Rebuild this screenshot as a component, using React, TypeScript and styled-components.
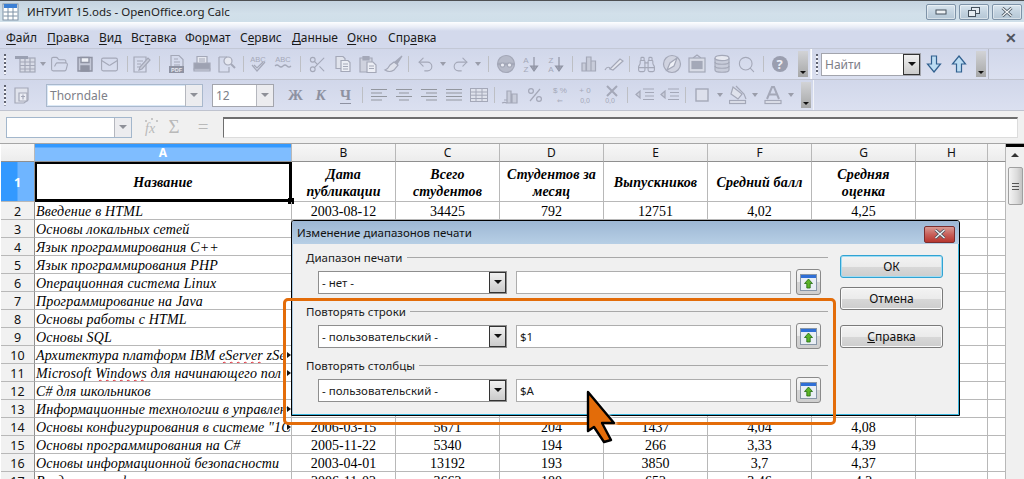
import { Fragment, ReactNode } from "react";
import {
  Binoculars,
  FolderOpen,
  Mail,
  Redo2,
  Scissors,
  Search,
  Undo2,
} from "lucide-react";
import styled, { createGlobalStyle } from "styled-components";

const uiFont = `"Noto Sans", "Open Sans", "Liberation Sans", sans-serif`;
const cellFont = `"Liberation Serif", serif`;
const gridLine = "#b8b8b8";
const orange = "#e36c09";
const iconGrey = "#a4a8b8";

const Global = createGlobalStyle`
  html, body {
    margin: 0;
    padding: 0;
    background: #fff;
  }
  * {
    box-sizing: border-box;
  }
`;

const Page = styled.div`
  position: relative;
  display: flex;
  flex-direction: column;
  width: 1024px;
  height: 479px;
  overflow: hidden;
  font-family: ${uiFont};
  color: #1a1a1a;
`;

/* window chrome */
const TitleBar = styled.div`
  display: flex;
  align-items: center;
  height: 22px;
  flex: none;
  padding: 0 2px 0 1px;
  border-top: 1px solid #4d4f52;
  background: linear-gradient(180deg, #c4d3e0 0%, #d2e0ea 60%, #cfdfe9 100%);
`;
const TitleText = styled.span`
  margin-left: 6px;
  font-size: 11.5px;
  color: #222;
`;
const WinButtons = styled.div`
  display: flex;
  gap: 3px;
  margin-left: auto;
`;
const WinButton = styled.div`
  display: flex;
  align-items: center;
  justify-content: center;
  width: 30px;
  height: 16px;
  border: 1px solid #7e93a8;
  border-radius: 2px;
  background: linear-gradient(180deg, #d9e5ee 0%, #c3d3e0 50%, #b4c6d5 100%);
  box-shadow: inset 0 0 0 1px rgba(255, 255, 255, 0.45);
`;
const MenuBar = styled.div`
  display: flex;
  align-items: center;
  height: 27px;
  flex: none;
  padding: 4px 5px 0 6px;
  border-bottom: 1px solid #c3c8d6;
  background: linear-gradient(180deg, #fdfeff 0, #e9edf6 5px, #d3d9ec 9px, #d3d9ec 100%);
  font-size: 12px;
`;
const MenuItem = styled.span<{ $w: number }>`
  width: ${(p) => p.$w}px;
  white-space: nowrap;
  u {
    text-underline-offset: 2px;
  }
`;
const MenuClose = styled.span`
  margin-left: auto;
  margin-right: 2px;
  font-size: 14px;
  font-weight: 700;
  color: #50535e;
`;

/* toolbars */
const ToolRow = styled.div<{ $h: number }>`
  display: flex;
  height: ${(p) => p.$h}px;
  flex: none;
  border-bottom: 1px solid #bfc3cf;
  background: linear-gradient(180deg, #d1d7ea 0%, #dbe0f0 100%);
`;
const Toolbar = styled.div<{ $w: number }>`
  display: flex;
  align-items: center;
  width: ${(p) => p.$w}px;
  flex: none;
  padding-left: 3px;
  border-right: 1px solid #f1f3f8;
`;
const FindToolbar = styled(Toolbar)`
  border-right: 1px solid #b6bac8;
  border-left: 1px solid #fff;
`;
const Grip = styled.div<{ $after: number }>`
  width: 5px;
  height: 21px;
  flex: none;
  margin-right: ${(p) => p.$after}px;
  background: repeating-linear-gradient(180deg, #5f6270 0 2px, #f6f7fb 2px 4px);
  clip-path: inset(0 2px 0 1px);
`;
const Tool = styled.div`
  display: flex;
  align-items: center;
  justify-content: center;
  width: 25px;
  height: 22px;
  flex: none;
  color: ${iconGrey};
  svg {
    display: block;
  }
`;
const LetterTool = styled(Tool)<{ $underline?: boolean; $italic?: boolean }>`
  font-family: ${cellFont};
  font-size: 15px;
  font-weight: 700;
  font-style: ${(p) => (p.$italic ? "italic" : "normal")};
  text-decoration: ${(p) => (p.$underline ? "underline" : "none")};
  text-underline-offset: 3px;
  color: #8d91a1;
`;
const Caret = styled.div<{ $w: number }>`
  display: flex;
  align-items: center;
  justify-content: center;
  width: ${(p) => p.$w}px;
  flex: none;
  &::before {
    content: "";
    border-top: 4px solid #9a9daa;
    border-left: 3px solid transparent;
    border-right: 3px solid transparent;
  }
`;
const Sep = styled.div<{ $l: number; $r: number }>`
  width: 1px;
  height: 16px;
  flex: none;
  margin: 0 ${(p) => p.$r}px 0 ${(p) => p.$l}px;
  background: #bdbfc4;
`;
const Overflow = styled.div<{ $h: number }>`
  display: flex;
  align-items: flex-end;
  justify-content: center;
  width: 10px;
  height: ${(p) => p.$h}px;
  flex: none;
  margin-left: auto;
  margin-right: 2px;
  padding-bottom: 3px;
  background: linear-gradient(180deg, #d2d3d6 0%, #a6a7a7 100%);
  &::after {
    content: "";
    border-top: 3px solid #111;
    border-left: 3px solid transparent;
    border-right: 3px solid transparent;
  }
`;
const HelpBadge = styled.div`
  display: flex;
  align-items: center;
  justify-content: center;
  width: 16px;
  height: 16px;
  border-radius: 50%;
  background: #9a9eaf;
  color: #eceef6;
  font-size: 13px;
  font-weight: 700;
`;

/* combos on the toolbars */
const Combo = styled.div<{ $w: number; $active?: boolean; $l?: number; $r?: number }>`
  display: flex;
  align-items: center;
  width: ${(p) => p.$w}px;
  height: 23px;
  flex: none;
  margin: 0 ${(p) => p.$r ?? 0}px 0 ${(p) => p.$l ?? 0}px;
  background: #fff;
  border: 1px solid ${(p) => (p.$active ? "#a9b8cc" : "#a3a5ad")};
  box-shadow: ${(p) => (p.$active ? "inset 0 0 0 1px #dbe8f6" : "none")};
  font-size: 12px;
  color: #7e8088;
`;
const ComboText = styled.span`
  flex: 1;
  padding-left: 3px;
  white-space: nowrap;
`;
const ComboArrow = styled.div<{ $solid?: boolean }>`
  display: flex;
  align-items: center;
  justify-content: center;
  width: 17px;
  height: 100%;
  flex: none;
  background: ${(p) => (p.$solid ? "linear-gradient(180deg,#f2f2f2,#c9c9c9)" : "#ececef")};
  border-left: 1px solid ${(p) => (p.$solid ? "#333" : "#b5b7be")};
  outline: ${(p) => (p.$solid ? "1px solid #333" : "none")};
  outline-offset: -1px;
  &::before {
    content: "";
    border-top: 4px solid ${(p) => (p.$solid ? "#111" : "#8e9098")};
    border-left: 4px solid transparent;
    border-right: 4px solid transparent;
  }
`;

/* formula bar */
const FormulaBar = styled.div`
  display: flex;
  align-items: center;
  height: 33px;
  flex: none;
  padding: 0 6px;
  background: #f0f0f0;
  border-bottom: 1px solid #a6a6a6;
`;
const NameBox = styled(Combo)`
  height: 21px;
  border-color: #a3b7cc;
`;
const FormulaTool = styled(Tool)<{ $gap: number }>`
  width: 22px;
  margin-right: ${(p) => p.$gap}px;
  color: #b9b9b9;
  font-family: ${cellFont};
  font-size: 19px;
`;
const FormulaInput = styled.div`
  flex: 1;
  height: 21px;
  background: #fff;
  border: 1px solid #dcdcdc;
  border-top: 2px solid #6e6e6e;
  border-left: 1px solid #6e6e6e;
`;

/* sheet */
const Sheet = styled.div`
  display: flex;
  flex: 1;
  min-height: 0;
  overflow: hidden;
`;
const Grid = styled.div`
  display: grid;
  grid-template-columns: 34px 257px repeat(6, 104px) 72px 18px;
  grid-template-rows: 18px 40px;
  grid-auto-rows: 18px;
  width: 1006px;
  padding-left: 1px;
  align-content: start;
`;
const HeadCell = styled.div<{ $on?: boolean }>`
  display: flex;
  align-items: center;
  justify-content: center;
  border-right: 1px solid ${gridLine};
  border-bottom: 1px solid #8f8f8f;
  background: ${(p) =>
    p.$on
      ? "linear-gradient(180deg,#3399ff 0,#3399ff 3px,#7fbdff 4px,#7fbdff 100%)"
      : "linear-gradient(180deg,#f7f7f7,#ececec)"};
  color: ${(p) => (p.$on ? "#fff" : "#111")};
  font-size: 12px;
  font-weight: ${(p) => (p.$on ? 700 : 400)};
`;
const RowHead = styled.div<{ $on?: boolean }>`
  display: flex;
  align-items: center;
  justify-content: center;
  padding-top: 1px;
  border-right: 1px solid #8f8f8f;
  border-bottom: 1px solid ${gridLine};
  background: ${(p) =>
    p.$on
      ? "linear-gradient(90deg,#3399ff 0,#3399ff 16px,#6fb5ff 17px,#6fb5ff 100%)"
      : "#f1f1f1"};
  color: ${(p) => (p.$on ? "#fff" : "#111")};
  font-size: 12.5px;
  font-weight: ${(p) => (p.$on ? 700 : 400)};
`;
const Cell = styled.div<{ $text?: boolean; $more?: boolean }>`
  position: relative;
  padding: 2px ${(p) => (p.$text ? "1px" : "0")} 0;
  border-right: 1px solid ${gridLine};
  border-bottom: 1px solid ${gridLine};
  overflow: hidden;
  white-space: nowrap;
  font-family: ${cellFont};
  font-size: 14px;
  line-height: 16px;
  font-style: ${(p) => (p.$text ? "italic" : "normal")};
  letter-spacing: ${(p) => (p.$text ? "0.17px" : "0")};
  text-align: ${(p) => (p.$text ? "left" : "center")};
  color: #000;
  &::after {
    content: "";
    display: ${(p) => (p.$more ? "block" : "none")};
    position: absolute;
    right: 0;
    top: 6px;
    border-left: 4px solid #111;
    border-top: 3px solid transparent;
    border-bottom: 3px solid transparent;
  }
`;
const HeaderCell = styled.div`
  display: flex;
  align-items: center;
  justify-content: center;
  padding: 2px 1px 0;
  border-right: 1px solid ${gridLine};
  border-bottom: 1px solid ${gridLine};
  font-family: ${cellFont};
  font-size: 14px;
  font-style: italic;
  font-weight: 700;
  line-height: 17px;
  letter-spacing: 0.15px;
  text-align: center;
  white-space: pre;
  color: #000;
`;
const SelectedHeader = styled(HeaderCell)`
  position: relative;
  border: 3px solid #000;
  border-left-width: 2px;
  border-top-width: 2px;
  &::after {
    content: "";
    position: absolute;
    right: -5px;
    bottom: -5px;
    width: 6px;
    height: 6px;
    background: #000;
  }
`;
const BlankCell = styled.div`
  border-right: 1px solid ${gridLine};
  border-bottom: 1px solid ${gridLine};
`;
const Squiggle = styled.span`
  text-decoration: underline wavy #e0202c 1px;
  text-underline-offset: 1px;
`;
const ScrollBar = styled.div`
  display: flex;
  flex-direction: column;
  align-items: center;
  width: 18px;
  flex: none;
  background: #f0f0f0;
  border-top: 3px solid #000;
`;
const ScrollUp = styled.div`
  width: 0;
  height: 0;
  margin-top: 6px;
  border-bottom: 4px solid #333;
  border-left: 4px solid transparent;
  border-right: 4px solid transparent;
`;
const ScrollThumb = styled.div`
  display: flex;
  flex-direction: column;
  gap: 2px;
  align-items: center;
  justify-content: center;
  width: 15px;
  height: 38px;
  margin-top: 10px;
  border: 1px solid #a0a0a0;
  border-radius: 2px;
  background: linear-gradient(90deg, #f4f4f4, #dcdcdc 60%, #c4c4c4);
  i {
    display: block;
    width: 7px;
    height: 1px;
    background: #555;
  }
`;

/* dialog */
const Dialog = styled.div`
  position: absolute;
  left: 291px;
  top: 220px;
  display: flex;
  flex-direction: column;
  width: 669px;
  height: 196px;
  border: 1px solid #000;
  border-radius: 3px 3px 0 0;
  background: #f0f0f0;
  box-shadow: inset -1px -1px 0 #39b4dc, inset 1px 0 0 #a8c8e0;
`;
const DialogTitle = styled.div`
  display: flex;
  align-items: center;
  justify-content: space-between;
  height: 23px;
  flex: none;
  padding: 0 4px 0 5px;
  background: linear-gradient(180deg, #9db7d4 0%, #b7cfe5 100%);
  font-size: 11.5px;
  color: #111;
  border-radius: 2px 2px 0 0;
`;
const DialogClose = styled.div`
  display: flex;
  align-items: center;
  justify-content: center;
  width: 31px;
  height: 17px;
  margin-top: 3px;
  border: 1px solid #7b2e2e;
  border-radius: 2px;
  background: linear-gradient(180deg, #d99b94 0%, #c8605a 50%, #b8362e 100%);
`;
const DialogBody = styled.div`
  display: flex;
  flex: 1;
  padding: 5px 0 0 14px;
`;
const Groups = styled.div`
  display: flex;
  flex-direction: column;
  gap: 8px;
  width: 522px;
`;
const Group = styled.div``;
const Legend = styled.div`
  display: flex;
  align-items: center;
  gap: 4px;
  height: 16px;
  margin-bottom: 4px;
  font-size: 11.5px;
  white-space: nowrap;
  &::after {
    content: "";
    flex: 1;
    height: 1px;
    background: #a8a8a8;
  }
`;
const FieldRow = styled.div`
  display: flex;
  align-items: center;
  height: 26px;
  padding-left: 12px;
`;
const Select = styled.div`
  display: flex;
  align-items: center;
  width: 189px;
  height: 23px;
  flex: none;
  margin-right: 9px;
  background: #fff;
  border: 1px solid #8e8e8e;
  font-size: 11.5px;
`;
const SelectText = styled.span`
  flex: 1;
  padding-left: 3px;
`;
const RangeInput = styled.div`
  display: flex;
  align-items: center;
  width: 275px;
  height: 23px;
  flex: none;
  padding-left: 3px;
  margin-right: 5px;
  background: #fff;
  border: 1px solid #adadad;
  font-size: 11.5px;
`;
const ShrinkButton = styled.div`
  display: flex;
  align-items: center;
  justify-content: center;
  width: 25px;
  height: 26px;
  flex: none;
  border: 1px solid #8a8a8a;
  border-radius: 3px;
  background: linear-gradient(180deg, #f6f6f6 0%, #ececec 50%, #d4d4d4 52%, #cfcfcf 100%);
`;
const Actions = styled.div`
  display: flex;
  flex-direction: column;
  width: 103px;
  margin: 6px 0 0 12px;
`;
const Action = styled.div<{ $gap: number; $def?: boolean }>`
  display: flex;
  align-items: center;
  justify-content: center;
  height: 23px;
  margin-bottom: ${(p) => p.$gap}px;
  border: 1px solid ${(p) => (p.$def ? "#31a3d3" : "#7a7a7a")};
  border-radius: 3px;
  background: linear-gradient(180deg, #f3f3f3 0%, #ebebeb 50%, #d8d8d8 52%, #cdcdcd 100%);
  box-shadow: ${(p) => (p.$def ? "0 0 0 1px #9fdcf3 inset" : "inset 0 0 0 1px #fafafa")};
  font-size: 12px;
  color: #111;
`;

/* annotation over the screenshot */
const Highlight = styled.div`
  position: absolute;
  left: 283px;
  top: 298px;
  width: 553px;
  height: 127px;
  border: 3px solid ${orange};
  border-radius: 5px;
  pointer-events: none;
`;
const Pointer = styled.svg`
  position: absolute;
  left: 580px;
  top: 384px;
  overflow: visible;
  filter: drop-shadow(2px 1px 1px rgba(255, 255, 255, 0.8));
`;

const stroke = { fill: "none", stroke: "currentColor", strokeWidth: 1.2 };

const TableIcon = () => (
  <svg width="22" height="20" viewBox="0 0 22 20" {...stroke}>
    <rect x="5" y="4" width="15" height="14" fill="#d8dbe6" />
    <path d="M5 8h15M5 11.5h15M5 15h15M10 4v14M15 4v14" />
    <rect x="0" y="2" width="13" height="3" fill="#9aa0b2" stroke="none" />
  </svg>
);
const SaveIcon = () => (
  <svg width="18" height="18" viewBox="0 0 18 18" fill="none" stroke="#8f93a3" strokeWidth="1.4">
    <path d="M2 2.5h14v13.5H2z" fill="#c3c7d6" />
    <path d="M5 2.5h8v5H5z" fill="#eef0f6" />
    <path d="M5 11h8v5H5z" fill="#8f93a3" />
  </svg>
);
const EditIcon = () => (
  <svg width="20" height="20" viewBox="0 0 20 20" {...stroke}>
    <path d="M3 3h12v15H3z" />
    <path d="M6 7h6M6 10h4M6 13h3" />
    <path d="M9 13l8-9 2 2-8 9-3 1z" fill="#c8ccda" />
  </svg>
);
const PdfIcon = () => (
  <svg width="18" height="20" viewBox="0 0 18 20" {...stroke}>
    <path d="M3 1.5h8l4 4v8H3z" />
    <path d="M6 5h4M6 8h6M6 11h6" />
    <rect x="1" y="12" width="15" height="7" fill="#8f93a3" stroke="none" />
    <text x="8.5" y="17.8" fontSize="5.5" fontFamily="Liberation Sans" fontWeight="700" fill="#e8eaf2" stroke="none" textAnchor="middle">PDF</text>
  </svg>
);
const PrintIcon = () => (
  <svg width="20" height="18" viewBox="0 0 20 18" {...stroke}>
    <path d="M5 8V1.5h10V8" fill="#e6e8f0" />
    <path d="M7 4h6M7 6h6" />
    <path d="M2 8h16v6H2z" fill="#9ea2b2" />
    <path d="M2 14h16v2H2z" fill="#c8ccda" />
  </svg>
);
const PreviewIcon = () => (
  <svg width="20" height="20" viewBox="0 0 20 20" {...stroke}>
    <path d="M2 3h8M2 3v15h10V13" />
    <circle cx="11" cy="7" r="4" fill="#e6e8f0" />
    <path d="M14 10l4 4" strokeWidth="2" />
  </svg>
);
const SpellIcon = ({ wave }: { wave?: boolean }) => (
  <svg width="20" height="20" viewBox="0 0 20 20" {...stroke}>
    <text x="10" y="8" fontSize="7.5" fontFamily="Liberation Sans" fill="currentColor" stroke="none" textAnchor="middle">ABC</text>
    {wave ? (
      <path d="M2 12q2-2 4 0t4 0 4 0 4 0" />
    ) : (
      <path d="M4 11l5 6 8-9M6 11l3 3 6-6" />
    )}
  </svg>
);
const CopyIcon = () => (
  <svg width="18" height="18" viewBox="0 0 18 18" {...stroke}>
    <path d="M2 1.5h7l2 2v10H2z" fill="#e0e3ec" />
    <path d="M7 5.5h7l2 2v9H7z" fill="#eceef5" />
    <path d="M9 9h5M9 11.5h5M9 14h5" />
  </svg>
);
const PasteIcon = () => (
  <svg width="20" height="20" viewBox="0 0 20 20" {...stroke}>
    <path d="M2 4h12v14H2z" fill="#cfd2de" />
    <path d="M5 2.5h6V6H5z" fill="#a4a8b8" />
    <path d="M9 8h6l3 3v7.5H9z" fill="#eceef5" />
    <path d="M11 12h5M11 14.5h5" />
  </svg>
);
const BrushIcon = () => (
  <svg width="20" height="18" viewBox="0 0 20 18" {...stroke}>
    <path d="M19 1l-7 6 2 2z" fill="#a4a8b8" />
    <path d="M11 7l4 3-4 5c-3 2-6 2-9 0 3-1 4-3 5-5z" fill="#dfe2ec" />
  </svg>
);
const GlobeIcon = () => (
  <svg width="20" height="20" viewBox="0 0 20 20" {...stroke}>
    <circle cx="10" cy="10" r="8.5" fill="#b6bac9" />
    <path d="M2 10h16" strokeWidth="2.5" />
    <circle cx="6.5" cy="11" r="2.2" fill="#e9ebf3" />
    <circle cx="13.5" cy="11" r="2.2" fill="#e9ebf3" />
  </svg>
);
const SortIcon = ({ top, bottom }: { top: string; bottom: string }) => (
  <svg width="20" height="18" viewBox="0 0 20 18" {...stroke}>
    <text x="5" y="8" fontSize="8" fontFamily="Liberation Sans" fill="currentColor" stroke="none" textAnchor="middle">{top}</text>
    <text x="5" y="16.5" fontSize="8" fontFamily="Liberation Sans" fill="currentColor" stroke="none" textAnchor="middle">{bottom}</text>
    <path d="M13 2v12M9.5 11l3.5 5 3.5-5z" fill="#a4a8b8" stroke="#8f93a3" />
  </svg>
);
const ChartIcon = () => (
  <svg width="18" height="18" viewBox="0 0 18 18" {...stroke}>
    <path d="M2 8h4v8H2zM6.5 2h4.5v14H6.5zM11 6h4.5v10H11z" fill="#c8ccda" />
  </svg>
);
const PenIcon = () => (
  <svg width="20" height="16" viewBox="0 0 20 16" {...stroke}>
    <path d="M1 14c2-4 5-3 5-1" />
    <path d="M6 13l10-10 3 2-10 9z" fill="#e6e8f0" />
  </svg>
);
const CompassIcon = () => (
  <svg width="20" height="20" viewBox="0 0 20 20" {...stroke}>
    <circle cx="10" cy="10" r="8.5" fill="#d0d3e0" />
    <path d="M15 4L8 9l-3 7 7-4z" fill="#eef0f6" />
  </svg>
);
const FrameIcon = () => (
  <svg width="20" height="20" viewBox="0 0 20 20" {...stroke}>
    <path d="M6 4l4-3 4 3" />
    <rect x="2" y="4" width="16" height="14" fill="#d8dbe6" />
    <rect x="5" y="7.5" width="10" height="7" fill="#a4a8b8" />
  </svg>
);
const DbIcon = () => (
  <svg width="18" height="20" viewBox="0 0 18 20" {...stroke}>
    <path d="M2 4v12c0 3 14 3 14 0V4" fill="#c8ccda" />
    <ellipse cx="9" cy="4" rx="7" ry="2.6" fill="#e6e8f0" />
    <path d="M2 8c0 3 14 3 14 0M2 12c0 3 14 3 14 0" />
  </svg>
);
const KeyIcon = () => (
  <svg width="20" height="20" viewBox="0 0 20 20" {...stroke}>
    <path d="M2 3h13v12l-4 3H2z" fill="#e0e3ec" />
    <path d="M6 8h8v8H6z" fill="#eceef5" />
    <path d="M10 9.5v5M8 11.5h4" />
  </svg>
);
const AlignIcon = ({ pattern }: { pattern: number[][] }) => (
  <svg width="18" height="14" viewBox="0 0 18 14" fill="none" stroke="#93979f" strokeWidth="1">
    {pattern.map(([x1, x2], i) => (
      <path key={i} d={`M${x1} ${1.5 + i * 3.5}H${x2}`} />
    ))}
  </svg>
);
const CellsIcon = () => (
  <svg width="20" height="16" viewBox="0 0 20 16" fill="#dfe2ec" stroke={iconGrey} strokeWidth="1">
    <rect x="1.5" y="1.5" width="17" height="13" />
    <path d="M1.5 5h17M1.5 8.2h17M1.5 11.5h17M7 1.5v13M13 1.5v13" />
  </svg>
);
const CoinsIcon = () => (
  <svg width="18" height="20" viewBox="0 0 18 20" {...stroke}>
    <path d="M1 18c2-1 3-1 5 0M3 15h3" />
    <path d="M6 6h4v12H6zM11 9h5v9h-5z" fill="#c8ccda" />
  </svg>
);
const PercentIcon = () => (
  <svg width="16" height="16" viewBox="0 0 16 16" {...stroke}>
    <circle cx="4" cy="4" r="2.4" />
    <circle cx="12" cy="12" r="2.4" />
    <path d="M13 2L3 14" />
  </svg>
);
const NumberIcon = ({ text, sub, cross }: { text: string; sub: string; cross?: boolean }) => (
  <svg width="22" height="20" viewBox="0 0 22 20" {...stroke}>
    <text x="11" y="8" fontSize="8" fontFamily="Liberation Sans" fill="currentColor" stroke="none" textAnchor="middle">{text}</text>
    <text x="11" y="18" fontSize="7" fontFamily="Liberation Sans" fill="currentColor" stroke="none" textAnchor="middle">{sub}</text>
    {cross && <path d="M8 1l10 10M18 1L8 11" strokeWidth="2" />}
  </svg>
);
const IndentIcon = () => (
  <svg width="20" height="16" viewBox="0 0 20 16" {...stroke}>
    <path d="M8 2h11M10 5.5h9M10 9h9M8 12.5h11" />
    <path d="M1 7.5L5 4v7z" fill="#c8ccda" />
  </svg>
);
const BorderIcon = () => (
  <svg width="14" height="14" viewBox="0 0 14 14" fill="#dde0ec" stroke="#a4a8b8" strokeWidth="1.4">
    <rect x="1" y="1" width="12" height="12" />
  </svg>
);
const FillIcon = () => (
  <svg width="18" height="20" viewBox="0 0 18 20" {...stroke}>
    <path d="M4 2l9 7-4 5-7-5z" fill="#dfe2ec" />
    <path d="M7 1l8 8 2 5" />
    <rect x="0.5" y="15.5" width="16" height="3" fill="#dfe2ec" />
  </svg>
);
const TextColorIcon = () => (
  <svg width="18" height="20" viewBox="0 0 18 20" {...stroke}>
    <path d="M3 14L8 2h2l5 12M5.5 9.5h7" strokeWidth="2" />
    <rect x="1" y="15.5" width="16" height="3" fill="#dfe2ec" />
  </svg>
);
const FxIcon = () => (
  <svg width="20" height="20" viewBox="0 0 20 20" fill="currentColor">
    <text x="3" y="16" fontSize="14" fontStyle="italic" fontFamily="Liberation Serif">fx</text>
    <path d="M4 3v2M3 4h2M10 1v2M9 2h2M15 3v2M14 4h2" stroke="currentColor" />
  </svg>
);
const SheetIcon = () => (
  <svg width="20" height="18" viewBox="0 0 20 18">
    <rect x="2" y="1" width="15" height="16" fill="#fff" stroke="#7f92a6" />
    <rect x="3" y="1" width="13" height="4" fill="#3b7fd4" />
    <path d="M2.5 9h14M2.5 13h14M7 5v12M12 5v12" stroke="#7f92a6" fill="none" />
  </svg>
);
const ShrinkIcon = () => (
  <svg width="17" height="17" viewBox="0 0 17 17">
    <rect x="0.5" y="0.5" width="16" height="16" fill="#e9eef5" stroke="#8796a8" />
    <rect x="1" y="1" width="15" height="3" fill="#2f6fd6" />
    <path d="M8.5 5l4 4.5H10.2V14H6.8V9.5H4.5z" fill="#5bb52a" stroke="#1f6a10" strokeWidth="0.8" />
  </svg>
);
const ArrowIcon = ({ up }: { up?: boolean }) => (
  <svg width="16" height="18" viewBox="0 0 16 18" fill="#bcdcf2" stroke="#31608f" strokeWidth="1.2">
    <path
      d={up ? "M8 1l6.5 8H10.5v8h-5V9H1.5z" : "M8 17l6.5-8H10.5V1h-5v8H1.5z"}
    />
  </svg>
);
const WinGlyph = ({ kind }: { kind: "min" | "max" | "close" }) => {
  if (kind === "min") {
    return (
      <svg width="12" height="8" viewBox="0 0 12 8">
        <rect x="1" y="2" width="10" height="4" fill="#eef2f5" stroke="#44505c" />
      </svg>
    );
  }
  if (kind === "max") {
    return (
      <svg width="12" height="10" viewBox="0 0 12 10" fill="#e4ebf1" stroke="#44505c">
        <rect x="3.5" y="0.5" width="8" height="6" />
        <rect x="0.5" y="3.5" width="7" height="6" />
      </svg>
    );
  }
  return (
    <svg width="12" height="10" viewBox="0 0 12 10" fill="none">
      <path d="M1.5 1l9 8M10.5 1l-9 8" stroke="#44505c" strokeWidth="3" />
      <path d="M1.5 1l9 8M10.5 1l-9 8" stroke="#f2f5f7" strokeWidth="1.4" />
    </svg>
  );
};

const menus: { w: number; label: ReactNode }[] = [
  { w: 41, label: <><u>Ф</u>айл</> },
  { w: 52, label: <><u>П</u>равка</> },
  { w: 32, label: <><u>В</u>ид</> },
  { w: 54, label: <>Вс<u>т</u>авка</> },
  { w: 55, label: <>Фо<u>р</u>мат</> },
  { w: 52, label: <>С<u>е</u>рвис</> },
  { w: 55, label: <><u>Д</u>анные</> },
  { w: 41, label: <><u>О</u>кно</> },
  { w: 50, label: <>Спр<u>а</u>вка</> },
];

const lucide = { size: 19, strokeWidth: 1.4 };

type Row = { name: ReactNode; more?: boolean; values?: string[] };

const rows: Row[] = [
  { name: "Введение в HTML", values: ["2003-08-12", "34425", "792", "12751", "4,02", "4,25"] },
  { name: "Основы локальных сетей" },
  { name: "Язык программирования C++" },
  { name: "Язык программирования PHP" },
  { name: "Операционная система Linux" },
  { name: "Программирование на Java" },
  { name: "Основы работы с HTML" },
  { name: "Основы SQL" },
  { name: <>Архитектура платформ IBM <Squiggle>eServer</Squiggle> zSe</>, more: true },
  { name: <>Microsoft <Squiggle>Windows</Squiggle> для начинающего пол</>, more: true },
  { name: "C# для школьников" },
  { name: "Информационные технологии в управлен", more: true },
  { name: 'Основы конфигурирования в системе "1С', more: true, values: ["2006-03-15", "5671", "204", "1437", "4,04", "4,08"] },
  { name: "Основы программирования на C#", values: ["2005-11-22", "5340", "194", "266", "3,33", "4,39"] },
  { name: "Основы информационной безопасности", values: ["2003-04-01", "13192", "193", "3850", "3,7", "4,37"] },
  { name: "Введение в информатику", values: ["2006-11-02", "3662", "180", "652", "3,46", "4,2"] },
];

const columns = ["B", "C", "D", "E", "F", "G", "H"];
const headers = ["Дата\nпубликации", "Всего\nстудентов", "Студентов за\nмесяц", "Выпускников", "Средний балл", "Средняя\nоценка"];

function SheetGrid() {
  return (
    <Grid>
      <HeadCell />
      <HeadCell $on>A</HeadCell>
      {columns.map((c) => (
        <HeadCell key={c}>{c}</HeadCell>
      ))}
      <HeadCell />

      <RowHead $on>1</RowHead>
      <SelectedHeader>Название</SelectedHeader>
      {headers.map((h) => (
        <HeaderCell key={h}>{h}</HeaderCell>
      ))}
      <BlankCell />
      <BlankCell />

      {rows.map((r, i) => (
        <Fragment key={i}>
          <RowHead>{i + 2}</RowHead>
          <Cell $text $more={r.more}>{r.name}</Cell>
          {[0, 1, 2, 3, 4, 5, 6, 7].map((c) => (
            <Cell key={c}>{r.values?.[c]}</Cell>
          ))}
        </Fragment>
      ))}
    </Grid>
  );
}

function PrintField({ label, value, range }: { label: string; value: string; range?: string }) {
  return (
    <Group>
      <Legend>{label}</Legend>
      <FieldRow>
        <Select>
          <SelectText>{value}</SelectText>
          <ComboArrow $solid />
        </Select>
        <RangeInput>{range}</RangeInput>
        <ShrinkButton>
          <ShrinkIcon />
        </ShrinkButton>
      </FieldRow>
    </Group>
  );
}

export default function App() {
  return (
    <Page>
      <Global />
      <TitleBar>
        <SheetIcon />
        <TitleText>ИНТУИТ 15.ods - OpenOffice.org Calc</TitleText>
        <WinButtons>
          <WinButton><WinGlyph kind="min" /></WinButton>
          <WinButton><WinGlyph kind="max" /></WinButton>
          <WinButton><WinGlyph kind="close" /></WinButton>
        </WinButtons>
      </TitleBar>
      <MenuBar>
        {menus.map((m, i) => (
          <MenuItem key={i} $w={m.w}>{m.label}</MenuItem>
        ))}
        <MenuClose>✕</MenuClose>
      </MenuBar>

      <ToolRow $h={31}>
        <Toolbar $w={811}>
          <Grip $after={5} />
          <Tool><TableIcon /></Tool>
          <Caret $w={9} />
          <Tool><FolderOpen {...lucide} /></Tool>
          <Tool><SaveIcon /></Tool>
          <Tool><Mail {...lucide} /></Tool>
          <Sep $l={5} $r={0} />
          <Tool><EditIcon /></Tool>
          <Sep $l={6} $r={4} />
          <Tool><PdfIcon /></Tool>
          <Tool><PrintIcon /></Tool>
          <Tool><PreviewIcon /></Tool>
          <Sep $l={4} $r={1} />
          <Tool><SpellIcon /></Tool>
          <Tool><SpellIcon wave /></Tool>
          <Sep $l={5} $r={4} />
          <Tool><Scissors {...lucide} /></Tool>
          <Tool><CopyIcon /></Tool>
          <Tool><PasteIcon /></Tool>
          <Tool><BrushIcon /></Tool>
          <Sep $l={3} $r={4} />
          <Tool><Undo2 {...lucide} /></Tool>
          <Caret $w={10} />
          <Tool><Redo2 {...lucide} /></Tool>
          <Caret $w={10} />
          <Sep $l={5} $r={4} />
          <Tool><GlobeIcon /></Tool>
          <Tool><SortIcon top="A" bottom="Z" /></Tool>
          <Tool><SortIcon top="Z" bottom="A" /></Tool>
          <Sep $l={4} $r={3} />
          <Tool><ChartIcon /></Tool>
          <Tool><PenIcon /></Tool>
          <Sep $l={3} $r={4} />
          <Tool><Binoculars {...lucide} /></Tool>
          <Tool><CompassIcon /></Tool>
          <Tool><FrameIcon /></Tool>
          <Tool><DbIcon /></Tool>
          <Tool><Search {...lucide} /></Tool>
          <Sep $l={4} $r={3} />
          <Tool><HelpBadge>?</HelpBadge></Tool>
          <Overflow $h={26} />
        </Toolbar>
        <FindToolbar $w={178}>
          <Grip $after={1} />
          <Combo $w={100}>
            <ComboText>Найти</ComboText>
            <ComboArrow $solid />
          </Combo>
          <Tool><ArrowIcon /></Tool>
          <Tool><ArrowIcon up /></Tool>
          <Overflow $h={26} />
        </FindToolbar>
      </ToolRow>

      <ToolRow $h={31}>
        <Toolbar $w={814}>
          <Grip $after={2} />
          <Tool><KeyIcon /></Tool>
          <Combo $w={157} $active $l={11} $r={9}>
            <ComboText>Thorndale</ComboText>
            <ComboArrow />
          </Combo>
          <Combo $w={62} $r={9}>
            <ComboText>12</ComboText>
            <ComboArrow />
          </Combo>
          <LetterTool>Ж</LetterTool>
          <LetterTool $italic>К</LetterTool>
          <LetterTool $underline>Ч</LetterTool>
          <Sep $l={4} $r={3} />
          <Tool><AlignIcon pattern={[[1, 17], [1, 12], [1, 17], [1, 12]]} /></Tool>
          <Tool><AlignIcon pattern={[[1, 17], [4, 14], [1, 17], [4, 14]]} /></Tool>
          <Tool><AlignIcon pattern={[[1, 17], [6, 17], [1, 17], [6, 17]]} /></Tool>
          <Tool><AlignIcon pattern={[[1, 17], [1, 17], [1, 17], [1, 17]]} /></Tool>
          <Tool><CellsIcon /></Tool>
          <Sep $l={3} $r={2} />
          <Tool><CoinsIcon /></Tool>
          <Tool><PercentIcon /></Tool>
          <Tool><NumberIcon text="$ %" sub="⇐" /></Tool>
          <Tool><NumberIcon text="+ 0" sub="0,0" /></Tool>
          <Tool><NumberIcon text="" sub="0,0" cross /></Tool>
          <Sep $l={5} $r={4} />
          <Tool><IndentIcon /></Tool>
          <Tool><IndentIcon /></Tool>
          <Sep $l={3} $r={3} />
          <Tool><BorderIcon /></Tool>
          <Caret $w={11} />
          <Tool><FillIcon /></Tool>
          <Caret $w={10} />
          <Tool><TextColorIcon /></Tool>
          <Caret $w={12} />
          <Overflow $h={26} />
        </Toolbar>
      </ToolRow>

      <FormulaBar>
        <NameBox $w={126} $r={9}>
          <ComboText />
          <ComboArrow />
        </NameBox>
        <FormulaTool $gap={0}><FxIcon /></FormulaTool>
        <FormulaTool $gap={7}>Σ</FormulaTool>
        <FormulaTool $gap={9}>=</FormulaTool>
        <FormulaInput />
      </FormulaBar>

      <Sheet>
        <SheetGrid />
        <ScrollBar>
          <ScrollUp />
          <ScrollThumb><i /><i /><i /></ScrollThumb>
        </ScrollBar>
      </Sheet>

      <Dialog>
        <DialogTitle>
          Изменение диапазонов печати
          <DialogClose><WinGlyph kind="close" /></DialogClose>
        </DialogTitle>
        <DialogBody>
          <Groups>
            <PrintField label="Диапазон печати" value="- нет -" />
            <PrintField label="Повторять строки" value="- пользовательский -" range="$1" />
            <PrintField label="Повторять столбцы" value="- пользовательский -" range="$A" />
          </Groups>
          <Actions>
            <Action $def $gap={9}>ОК</Action>
            <Action $gap={15}>Отмена</Action>
            <Action $gap={0}><span><u>С</u>правка</span></Action>
          </Actions>
        </DialogBody>
      </Dialog>

      <Highlight />
      <Pointer width="36" height="62" viewBox="0 0 36 62">
        <path
          d="M8 8L34 39H22L31 56L24 58L14 43L8 47Z"
          fill={orange}
          stroke="#000"
          strokeWidth="2.4"
          strokeLinejoin="round"
        />
      </Pointer>
    </Page>
  );
}
